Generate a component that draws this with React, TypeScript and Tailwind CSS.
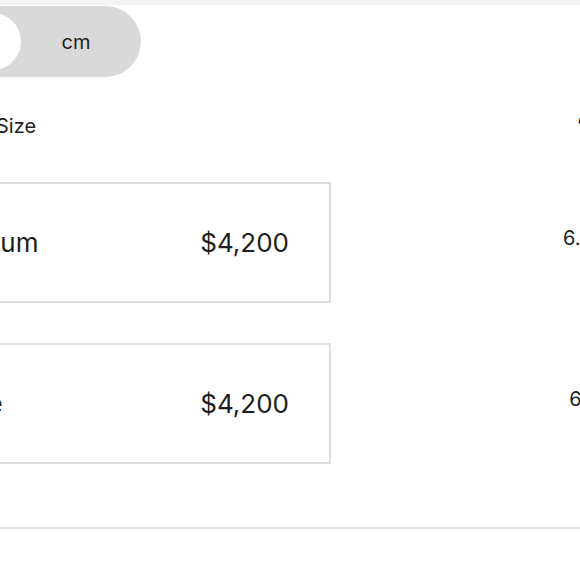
import React from 'react';

const rows = [
  { name: 'Platinum', price: '$4,200', size: '6.25' },
  { name: 'White', price: '$4,200', size: '6.5' },
];

export default function App() {
  return (
    <div className="w-[580px] h-[580px] overflow-hidden bg-white text-[#1e1e1e] font-['Inter',sans-serif]">
      <div className="h-[5px] bg-[#f4f4f4]" />

      {/* unit toggle */}
      <div className="mt-[1px] ml-[-43px] flex h-[71px] w-[184px] items-center rounded-full bg-[#d9d9d9] pl-[7px] pr-[10px]">
        <div className="h-[57px] w-[57px] shrink-0 rounded-full bg-white" />
        <span className="flex-1 text-center text-[20px] leading-none">cm</span>
      </div>

      {/* table header */}
      <div className="mt-[37px] flex h-[24px] items-center text-[20px] leading-[24px]">
        <span className="ml-[-4px] w-[581px] shrink-0">Size</span>
        <span className="shrink-0">’</span>
      </div>

      {/* rows */}
      <div className="mt-[44px] flex flex-col gap-[40px]">
        {rows.map((r) => (
          <div key={r.name} className="flex items-center">
            <div className="ml-[-111px] flex h-[121px] w-[442px] shrink-0 items-center justify-between border-2 border-[#dedede] px-10 text-[26px]">
              <span className="tracking-[0.01em]">{r.name}</span>
              <span>{r.price}</span>
            </div>
            <div className="ml-[232px] w-[42px] shrink-0 pb-[10px] text-center text-[20px]">{r.size}</div>
          </div>
        ))}
      </div>

      <div className="mt-[63px] h-[2px] bg-[#e0e0e0]" />
    </div>
  );
}
